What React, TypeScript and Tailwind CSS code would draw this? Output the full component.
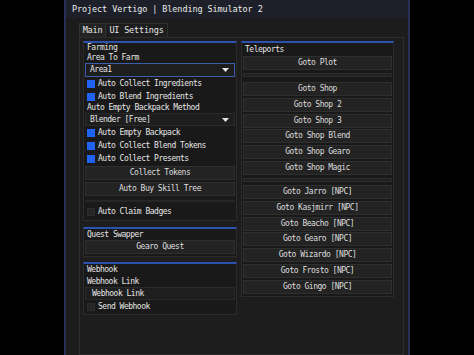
const Btn = ({ label, className = "" }: { label: string; className?: string }) => (
  <div className={`h-[14px] shrink-0 flex items-center justify-center bg-[#232323] border border-[#2f2f2f] text-[#dedede] ${className}`}>
    {label}
  </div>
)

const Check = ({ label, on, h }: { label: string; on?: boolean; h: string }) => (
  <div className={`${h} shrink-0 flex items-center pl-[2px] gap-[3px]`}>
    <div className={`w-[8px] h-[8px] ${on ? "bg-[#2063f0]" : "bg-[#262626] border border-[#2c2c2c]"}`} />
    <span>{label}</span>
  </div>
)

const Combo = ({ value, focused, h }: { value: string; focused?: boolean; h: string }) => (
  <div
    className={`${h} shrink-0 flex items-center justify-between pl-[4px] pr-[5px] bg-[#1e1e1e] border ${
      focused ? "border-[#3d5cab]" : "border-[#2a2a2a]"
    }`}
  >
    <span>{value}</span>
    <svg width="7" height="4" viewBox="0 0 7 4">
      <path d="M0 0h7L3.5 4z" fill="#e6e6e6" />
    </svg>
  </div>
)

const Panel = ({ children, className = "" }: { children: React.ReactNode; className?: string }) => (
  <div className={`flex flex-col border border-[#2b2b2b] border-t-2 border-t-[#2c50b0] bg-[#191919] px-[1px] ${className}`}>
    {children}
  </div>
)

const Sep = ({ className = "" }: { className?: string }) => (
  <div className={`h-[4px] shrink-0 bg-[#202020] border border-[#2c2c2c] ${className}`} />
)

export default function App() {
  const shops = ["Goto Shop", "Goto Shop 2", "Goto Shop 3", "Goto Shop Blend", "Goto Shop Gearo", "Goto Shop Magic"]
  const npcs = [
    "Goto Jarro [NPC]",
    "Goto Kasjmirr [NPC]",
    "Goto Beacho [NPC]",
    "Goto Gearo [NPC]",
    "Goto Wizardo [NPC]",
    "Goto Frosto [NPC]",
    "Goto Gingo [NPC]",
  ]
  return (
    <div
      className="w-[474px] h-[355px] bg-black overflow-hidden text-[8px] tracking-[-0.5px] leading-none text-[#e6e6e6]"
      style={{ fontFamily: '"DejaVu Sans Mono", monospace' }}
    >
      <div className="ml-[64px] w-[346px] h-full flex flex-col bg-[#1c1c1c] border-x-2 border-[#272e58]">
        {/* title bar */}
        <div className="h-[18px] shrink-0 flex items-center pl-[6px] bg-[#1d2029] text-[8.5px] tracking-[-0.1px] text-[#ececec]">
          Project Vertigo | Blending Simulator 2
        </div>

        <div className="flex-1 flex flex-col pl-[13px] pr-[4px] pt-[5px]">
          {/* tabs */}
          <div className="h-[14px] shrink-0 flex text-[8.5px] tracking-[-0.2px]">
            <div className="w-[27px] flex items-center justify-center bg-[#232323] border border-[#333333] border-b-0">Main</div>
            <div className="w-[62px] flex items-center justify-center bg-[#1d1d1d] border border-[#303030] border-b-0 border-l-0">
              UI Settings
            </div>
          </div>

          {/* child */}
          <div className="flex-1 flex gap-[4px] border border-[#2d2d2d] bg-[#1d1d1d] pl-[3px] pr-[9px] pt-[3px]">
            {/* left column */}
            <div className="w-[154px] flex flex-col">
              <Panel>
                <div className="h-[10px] shrink-0 flex items-center pl-[2px]">Farming</div>
                <div className="h-[9px] shrink-0 flex items-center pl-[2px]">Area To Farm</div>
                <Combo value="Area1" focused h="h-[14px] mt-[1px]" />
                <Check label="Auto Collect Ingredients" on h="h-[14px]" />
                <Check label="Auto Blend Ingredients" on h="h-[12px]" />
                <div className="h-[10px] shrink-0 flex items-center pl-[2px]">Auto Empty Backpack Method</div>
                <Combo value="Blender [Free]" h="h-[13px]" />
                <Check label="Auto Empty Backpack" on h="h-[13px]" />
                <Check label="Auto Collect Blend Tokens" on h="h-[13px]" />
                <Check label="Auto Collect Presents" on h="h-[13px]" />
                <Btn label="Collect Tokens" className="mt-[1px]" />
                <Btn label="Auto Buy Skill Tree" className="mt-[2px]" />
                <div className="h-[2px] shrink-0 mt-[4px] bg-[#262626]" />
                <Check label="Auto Claim Badges" h="h-[12px] mt-[4px]" />
                <div className="h-[2px] shrink-0" />
              </Panel>

              <Panel className="mt-[6px]">
                <div className="h-[11px] shrink-0 flex items-center pl-[2px]">Quest Swapper</div>
                <Btn label="Gearo Quest" />
                <div className="h-[2px] shrink-0" />
              </Panel>

              <Panel className="mt-[5px]">
                <div className="h-[12px] shrink-0 flex items-center pl-[2px]">Webhook</div>
                <div className="h-[11px] shrink-0 flex items-center pl-[2px]">Webhook Link</div>
                <div className="h-[13px] shrink-0 flex items-center pl-[6px] bg-[#1e1e1e] border border-[#2a2a2a]">
                  Webhook Link
                </div>
                <Check label="Send Webhook" h="h-[13px]" />
                <div className="h-[1px] shrink-0" />
              </Panel>
            </div>

            {/* right column */}
            <div className="w-[153px] flex flex-col">
              <Panel>
                <div className="h-[13px] shrink-0 flex items-center pl-[2px]">Teleports</div>
                <Btn label="Goto Plot" />
                <Sep className="mt-[3px] mb-[5px]" />
                <div className="flex flex-col gap-[1.8px]">
                  {shops.map((s) => (
                    <Btn key={s} label={s} />
                  ))}
                </div>
                <Sep className="my-[3px]" />
                <div className="flex flex-col gap-[1.8px]">
                  {npcs.map((s) => (
                    <Btn key={s} label={s} />
                  ))}
                </div>
                <div className="h-[2px] shrink-0" />
              </Panel>
            </div>
          </div>
        </div>
      </div>
    </div>
  )
}
